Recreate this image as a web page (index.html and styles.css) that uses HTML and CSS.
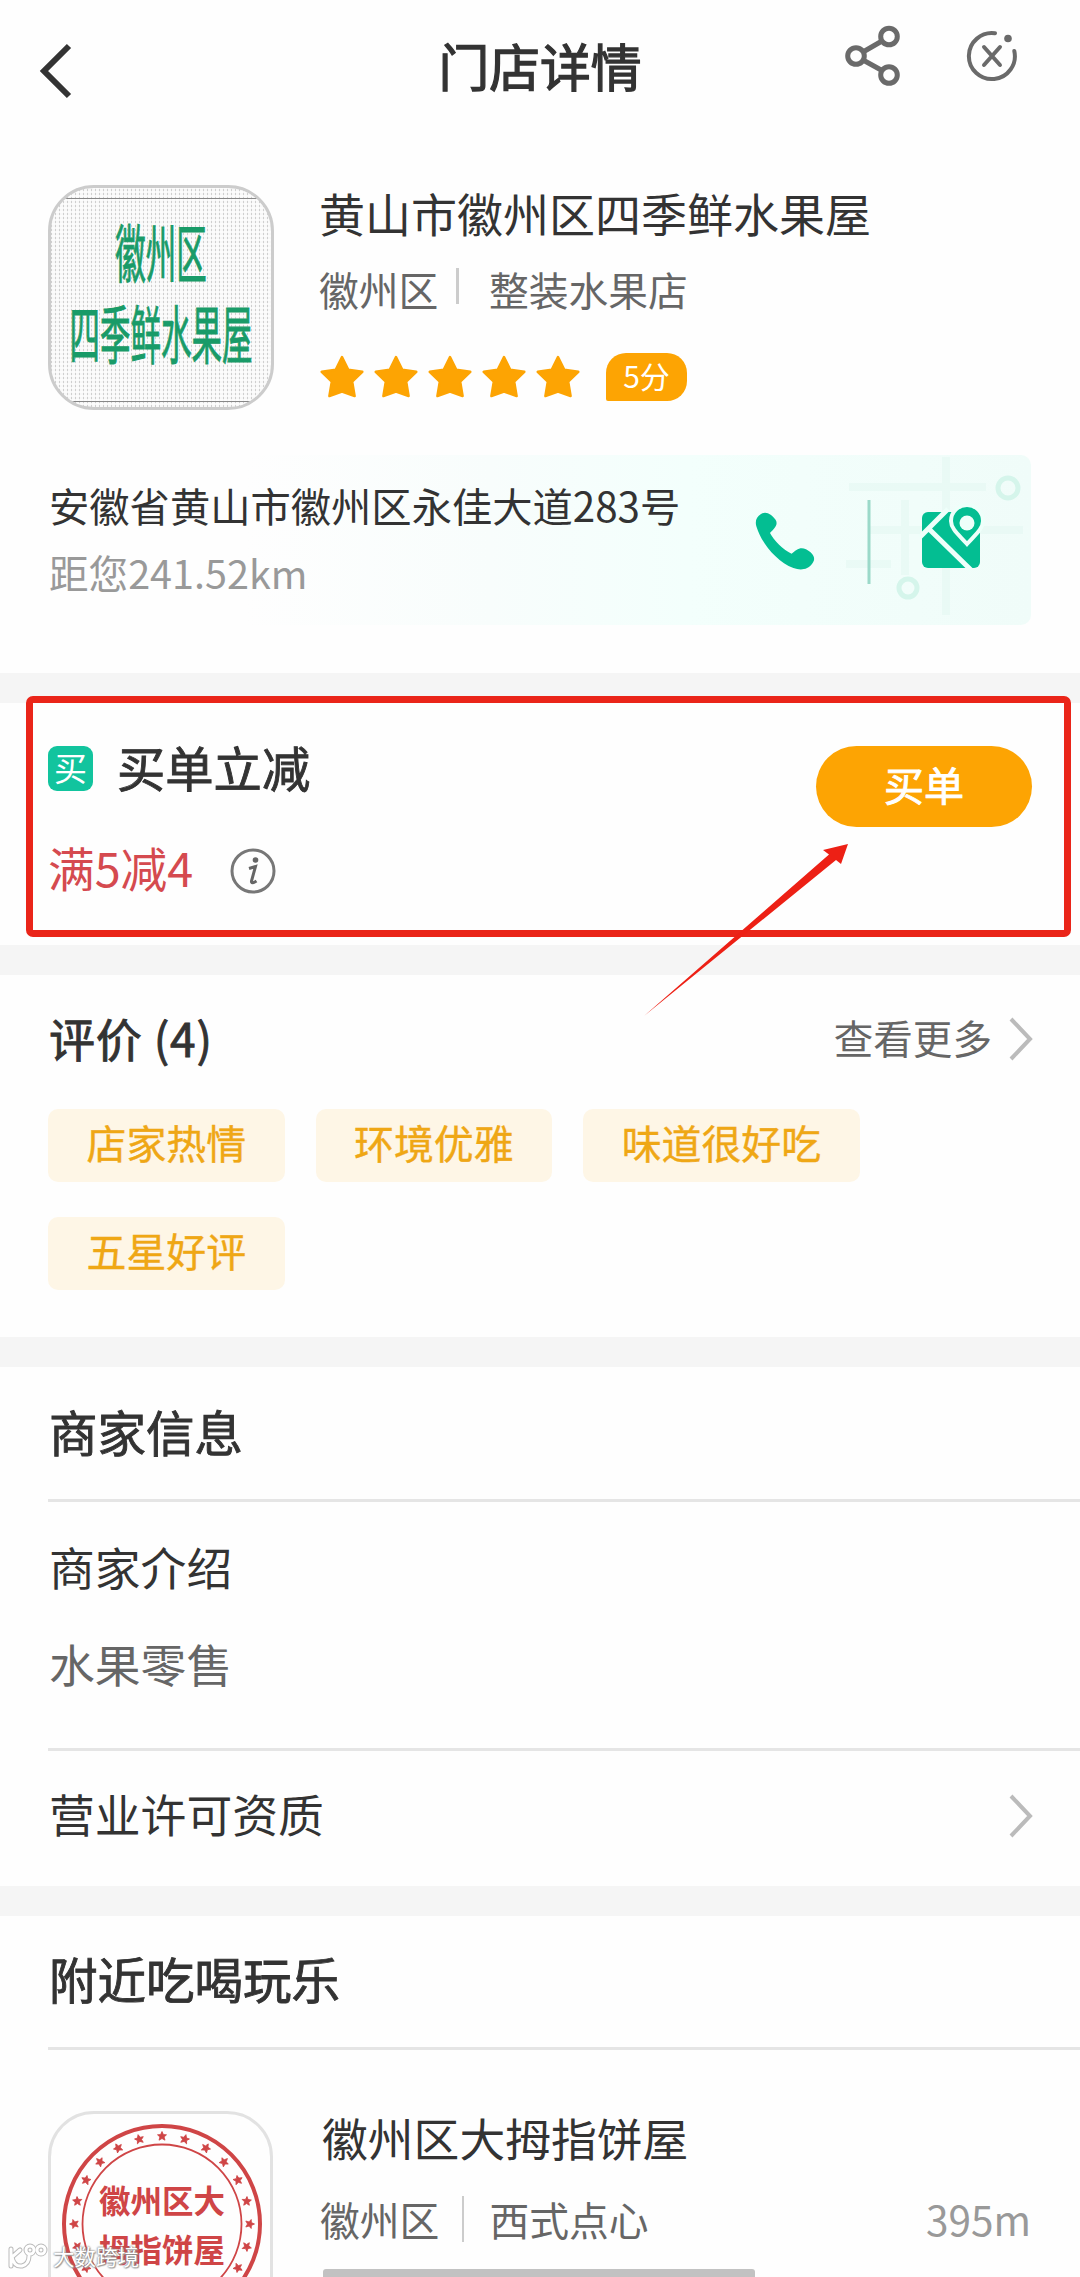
FILE: index.html
```html
<!DOCTYPE html>
<html lang="zh-CN">
<head>
<meta charset="utf-8">
<title>门店详情</title>
<link rel="stylesheet" href="styles.css">
</head>
<body>
<main class="page">
  <header class="header">
    <svg class="back" width="40" height="60" viewBox="0 0 40 60"><path d="M33 5 8 30 33 55" fill="none" stroke="#333" stroke-width="6"/></svg>
    <h1 class="header-title medium">门店详情</h1>
    <div class="header-actions">
      <svg width="64" height="64" viewBox="0 0 64 64" fill="none" stroke="#6a6a6a" stroke-width="5"><circle cx="18" cy="32" r="8.3"/><circle cx="51" cy="12.500" r="8.300"/><circle cx="51" cy="51" r="8.300"/><path d="M25 28 44 17M25 36 44 46.500"/></svg>
      <svg width="56" height="56" viewBox="0 0 56 56" fill="none" stroke="#6a6a6a" stroke-width="4" stroke-linecap="round"><path d="M31 5.300A23 23 0 1 0 50.300 23"/><path d="M20 19 36 37M36 19 20 37"/><circle cx="44" cy="10.500" r="3.800" fill="#6a6a6a" stroke="none"/></svg>
    </div>
  </header>

  <section class="store">
    <div class="store-logo">
      <div class="logo-frame">
        <span class="logo-text">徽州区</span>
        <span class="logo-text">四季鲜水果屋</span>
      </div>
    </div>
    <div class="store-info">
      <h2 class="name">黄山市徽州区四季鲜水果屋</h2>
      <p class="meta"><span>徽州区</span><i class="bar"></i><span>整装水果店</span></p>
      <div class="rating">
        <svg class="stars" width="260" height="44" viewBox="0 0 260 44" fill="#fda403" stroke="#fda403" stroke-width="2.500" stroke-linejoin="round">
          <defs><path id="star" d="M22 2 28.300 14.800 42.300 16.800 32.200 26.700 34.600 41 22 36.500 9.400 41 11.800 26.700 1.700 16.800 15.700 14.800Z"/></defs>
          <use href="#star"/><use href="#star" x="54"/><use href="#star" x="108"/><use href="#star" x="162"/><use href="#star" x="216"/>
        </svg>
        <span class="score">5分</span>
      </div>
    </div>
  </section>

  <section class="address">
    <div class="address-text">
      <p class="address-line">安徽省黄山市徽州区永佳大道283号</p>
      <p class="distance">距您241.52km</p>
    </div>
    <svg class="address-map" width="440" height="170" viewBox="0 0 440 170">
      <g fill="none" stroke="#e0f7f0" stroke-width="8">
        <path d="M258 32H395M278 75H432M255 109H300M355 2V160M314 45V120" opacity=".45"/>
        <circle cx="417" cy="33" r="10" stroke="#d5f5eb" stroke-width="5"/>
        <circle cx="317" cy="133" r="9" stroke="#d5f5eb" stroke-width="5"/>
      </g>
      <path transform="translate(17 6) scale(.9)" d="M170 59C175 55 182 59 186 65C190 71 184 76 180 80C184 88 195 99 204 103C209 99 213 95 220 98C227 102 232 107 227 114C222 121 214 122 206 119C187 111 171 92 165 73C163 67 165 62 170 59Z" fill="#03be92"/>
      <path d="M278 45V129" stroke="#9bd9c9" stroke-width="3"/>
      <rect x="331" y="57" width="58" height="56" rx="6" fill="#03be92"/>
      <path d="M329 82 357 54M338 74 380 115" fill="none" stroke="#eefffa" stroke-width="5"/>
      <path d="M376 89C368 80 360 74 360 66A16 16 0 0 1 392 66C392 74 384 80 376 89Z" fill="#03be92" stroke="#eefffa" stroke-width="4"/>
      <circle cx="376" cy="68" r="7.500" fill="#eefffa"/>
    </svg>
  </section>

  <section class="pay band">
    <div class="pay-row">
      <span class="pay-icon">买</span>
      <h3 class="pay-title medium">买单立减</h3>
    </div>
    <div class="pay-row discount">
      <span>满5减4</span>
      <svg width="46" height="46" viewBox="0 0 46 46"><circle cx="23" cy="23" r="21" fill="none" stroke="#777" stroke-width="3"/><circle cx="25.500" cy="12" r="2.800" fill="#666"/><path d="M19 20.500 25.500 18.500 21.500 33Q21 36.500 26.500 33" fill="none" stroke="#666" stroke-width="3"/></svg>
    </div>
    <a class="pay-button medium">买单</a>
    <div class="highlight"></div>
    <svg class="arrow" width="210" height="180" viewBox="0 0 210 180"><path d="M2 176 187 14.500 181 10 206 4 199 24 194 20Z" fill="#ed2015"/></svg>
  </section>

  <section class="reviews band">
    <div class="row">
      <h3 class="reviews-title medium">评价 (4)</h3>
      <a class="more">查看更多<svg class="chevron" width="26" height="46" viewBox="0 0 26 46"><path d="M3 3 22 23 3 43"/></svg></a>
    </div>
    <div class="tags"><span>店家热情</span><span>环境优雅</span><span>味道很好吃</span><span>五星好评</span></div>
  </section>

  <section class="merchant band">
    <h3 class="section-title medium">商家信息</h3>
    <div class="intro">
      <p>商家介绍</p>
      <p class="muted">水果零售</p>
    </div>
    <div class="license row">
      <span>营业许可资质</span>
      <svg class="chevron" width="26" height="46" viewBox="0 0 26 46"><path d="M3 3 22 23 3 43"/></svg>
    </div>
  </section>

  <section class="nearby band">
    <h3 class="section-title medium">附近吃喝玩乐</h3>
    <article class="shop">
      <div class="seal-card">
        <svg width="220" height="220" viewBox="0 0 220 220" fill="none" stroke="#cf4546">
          <circle cx="111" cy="110" r="98" stroke-width="4"/>
          <circle cx="111" cy="110" r="79.500" stroke-width="1.800"/>
          <g fill="#cf4546" stroke="#cf4546" stroke-width=".8">
            <defs><path id="dot" d="M111 17.500 112.400 20.600 115.500 20.800 113.100 23 114 26.200 111 24.500 108 26.200 108.900 23 106.500 20.800 109.600 20.600Z"/></defs>
            <g id="quarter"><use href="#dot"/><use href="#dot" transform="rotate(15 111 110)"/><use href="#dot" transform="rotate(30 111 110)"/><use href="#dot" transform="rotate(45 111 110)"/><use href="#dot" transform="rotate(60 111 110)"/><use href="#dot" transform="rotate(75 111 110)"/></g>
            <use href="#quarter" transform="rotate(90 111 110)"/><use href="#quarter" transform="rotate(180 111 110)"/><use href="#quarter" transform="rotate(270 111 110)"/>
          </g>
          <g class="seal-text"><text x="48" y="99">徽州区大</text><text x="48" y="148">拇指饼屋</text></g>
        </svg>
      </div>
      <div class="shop-info">
        <h4 class="name">徽州区大拇指饼屋</h4>
        <div class="row">
          <p class="meta"><span>徽州区</span><i class="bar tall"></i><span>西式点心</span></p>
          <span class="shop-distance">395m</span>
        </div>
        <div class="scroll-hint"></div>
      </div>
    </article>
  </section>

  <div class="watermark">
    <svg width="40" height="28" viewBox="0 0 40 28" fill="none" stroke-linecap="round"><g stroke="#bbb" stroke-width="5"><path d="M3 7V24M12 8 4 15Q6 25 14 24Q21 22 21 14"/><circle cx="22" cy="8" r="4"/><circle cx="33" cy="8" r="4"/></g><g stroke="#fff" stroke-width="3"><path d="M3 7V24M12 8 4 15Q6 25 14 24Q21 22 21 14"/><circle cx="22" cy="8" r="4"/><circle cx="33" cy="8" r="4"/></g></svg>
    <span>大数跨境</span>
  </div>
</main>
</body>
</html>
```
FILE: styles.css
```css
* { box-sizing: border-box; margin: 0; padding: 0; }
body { background: #fff; }
h1, h2, h3, h4 { font-weight: 400; }
svg { display: block; flex: none; }

.page {
  position: relative;
  width: 1080px;
  height: 2277px;
  overflow: hidden;
  background: #fefefe;
  color: #333;
  font-family: "Noto Sans CJK SC", sans-serif;
  font-size: 46px;
  line-height: 60px;
}
.medium { -webkit-text-stroke: 0.9px currentColor; }
.row { display: flex; justify-content: space-between; align-items: center; }

.header {
  display: grid;
  grid-template-columns: 240px 1fr 240px;
  height: 185px;
}
.back { margin: 41px 0 0 36px; }
.header-title { margin-top: 35px; font-size: 50.8px; text-align: center; -webkit-text-stroke-width: 1.3px; }
.header-actions { display: flex; margin: 24px 0 0 -2px; gap: 62px; }
.header-actions svg:last-child { margin-top: 4px; }

.store { display: flex; gap: 45px; height: 270px; padding-left: 48px; }
.store-logo {
  flex: none;
  width: 226px;
  height: 225px;
  padding: 10px 1px;
  border: 3px solid #ccc;
  border-radius: 46px;
  overflow: hidden;
  background:
    repeating-linear-gradient(0deg, transparent 0 2px, rgba(253, 253, 253, .8) 2px 4px),
    repeating-linear-gradient(90deg, #cfcfcf 0 1px, #f8f8f8 1px 4px);
}
.logo-frame {
  height: 204px;
  border: 1px solid #888;
  border-width: 1px 0;
  padding-top: 22px;
  display: flex;
  flex-direction: column;
  align-items: center;
  gap: 20px;
  color: #199b68;
}
.logo-text {
  margin: 15px 0;
  font-size: 30.5px;
  line-height: 31px;
  white-space: nowrap;
  transform: scaleY(2.05);
  -webkit-text-stroke: 0.5px currentColor;
}
.store-info { display: flex; flex-direction: column; }
.name { font-size: 46px; line-height: 60px; }
.meta { display: flex; align-items: center; color: #666; font-size: 39.8px; line-height: 52px; }
.bar { width: 2.5px; height: 36px; margin: -6px 30px 0 18px; background: #ccc; }
.bar.tall { width: 2px; height: 46px; margin: 0 25px 0 23px; }
.store .name { margin-top: -3px; }
.store .meta { margin-top: 21px; }
.rating { display: flex; gap: 26px; margin-top: 38px; }
.stars { margin-top: 2px; margin-left: 1px; }
.score {
  width: 81px;
  height: 48px;
  border-radius: 20px 20px 20px 2px;
  background: #fda403;
  color: #fff;
  font-size: 30px;
  line-height: 44px;
  text-align: center;
}

.address {
  display: flex;
  justify-content: space-between;
  height: 170px;
  margin: 0 49px 48px;
  border-radius: 10px;
  background: linear-gradient(90deg, #fefefe 20%, #f8fdfc 45%, #f3fffc 65%, #f0fcf9);
}
.address-text { flex: none; width: 542px; padding-top: 24px; white-space: nowrap; }
.address-line { font-size: 40.3px; line-height: 52px; }
.distance { margin-top: 15px; color: #999; font-size: 39.6px; line-height: 52px; }

.band::before {
  content: "";
  display: block;
  height: 30px;
  background: #f5f5f5;
}
.pay { position: relative; height: 272px; }
.pay-row { display: flex; align-items: center; margin: 33px 0 0 48px; height: 60px; gap: 24px; }
.pay-icon {
  width: 45px;
  height: 45px;
  margin-top: 4px;
  border-radius: 9px;
  background: #12c49e;
  color: #fff;
  font-size: 33px;
  line-height: 42px;
  text-align: center;
}
.pay-title { font-size: 48.3px; }
.discount { margin-top: 41px; gap: 37px; color: #d54a4f; font-size: 46.7px; }
.discount svg { margin-top: 7px; }
.pay-button {
  position: absolute;
  left: 816px;
  top: 73px;
  width: 216px;
  height: 81px;
  border-radius: 41px;
  background: #fda403;
  color: #fff;
  font-size: 40px;
  line-height: 77px;
  text-align: center;
}
.highlight {
  position: absolute;
  left: 26px;
  top: 23px;
  width: 1045px;
  height: 241px;
  border: 7px solid #ea2519;
  border-radius: 7px;
}
.arrow { position: absolute; left: 642px; top: 167px; z-index: 2; }

.reviews { height: 392px; }
.reviews .row { height: 60px; margin: 32px 46px 0 49px; }
.reviews-title { font-size: 46px; letter-spacing: .8px; margin-top: -1px; }
.more { display: flex; align-items: center; gap: 16px; color: #666; font-size: 39.6px; }
.chevron { fill: none; stroke: #bbb; stroke-width: 4; margin-top: 4px; }
.tags { display: flex; flex-wrap: wrap; gap: 35px 31px; margin: 42px 49px 0 48px; }
.tags span {
  height: 73px;
  padding: 0 38.5px;
  border-radius: 10px;
  background: #fef6e6;
  color: #efa715;
  font-size: 39.9px;
  line-height: 65px;
  -webkit-text-stroke: 0.4px currentColor;
}

.section-title {
  height: 135px;
  margin-left: 48px;
  padding-left: 1px;
  border-bottom: 3px solid #e5e5e5;
  font-size: 48.5px;
  line-height: 128px;
}
.intro { height: 249px; margin-left: 48px; padding: 34px 0 0 1px; border-bottom: 3px solid #e5e5e5; font-size: 45.8px; }
.muted { margin-top: 37px; color: #666; }
.merchant { height: 549px; }
.license { height: 124px; margin: 0 46px 0 49px; font-size: 45.8px; }
.license .chevron { margin-top: 5px; }
.nearby .section-title { height: 134px; line-height: 124px; }
.shop { display: flex; margin: 61px 49px 0 48px; gap: 49px; }
.seal-card { flex: none; width: 225px; height: 224px; border: 3px solid #e2e2e2; border-radius: 46px; }
.seal-text { fill: #cf4546; stroke: none; font-size: 31.5px; font-weight: 700; }
.shop-info { flex: 1; }
.shop .name { margin-top: -4px; font-size: 45.8px; }
.shop .row { margin: 26px 0 0 -2px; }
.shop-distance { color: #999; font-size: 40.5px; line-height: 52px; }
.scroll-hint { width: 432px; height: 12px; margin: 24px 0 0 1px; border-radius: 3px; background: #c2c2c2; }

.watermark {
  position: absolute;
  left: 8px;
  top: 2242px;
  display: flex;
  gap: 5px;
  color: #fff;
  font-size: 21.5px;
  line-height: 28px;
  text-shadow: 0 0 2px #777, 0 0 2px #999, 1px 1px 1px #aaa;
}
```
